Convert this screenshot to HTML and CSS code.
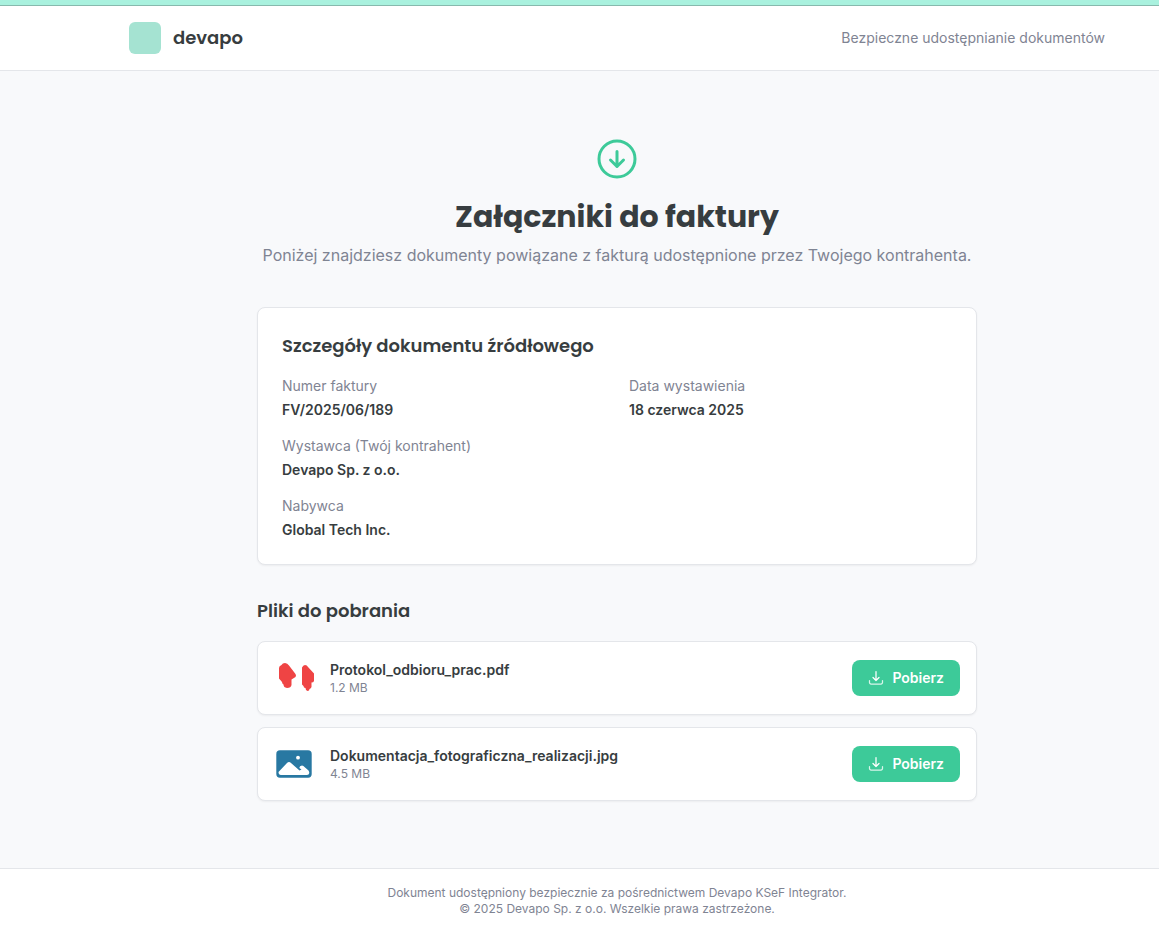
FILE: index.html
```html
<!DOCTYPE html>
<html lang="pl">
<head>
    <meta charset="UTF-8">
    <meta name="viewport" content="width=device-width, initial-scale=1.0">
    <title>Załączniki do faktury</title>
    <link rel="stylesheet" href="styles.css">
</head>
<body>
    <div class="top-strip"></div>

    <header class="header">
        <div class="header-inner">
            <div class="brand">
                <span class="brand-logo"></span>
                <span class="brand-name">devapo</span>
            </div>
            <span class="header-note">Bezpieczne udostępnianie dokumentów</span>
        </div>
    </header>

    <main class="main">
        <div class="intro">
            <svg class="intro-icon" viewBox="0 0 24 24" fill="none" stroke="currentColor" stroke-width="1.5" stroke-linecap="round" stroke-linejoin="round">
                <circle cx="12" cy="12" r="9"/>
                <path d="M12 8.25v7.5M8.75 12.5 12 15.75l3.25-3.25"/>
            </svg>
            <h1>Załączniki do faktury</h1>
            <p>Poniżej znajdziesz dokumenty powiązane z fakturą udostępnione przez Twojego kontrahenta.</p>
        </div>

        <section class="card">
            <h2>Szczegóły dokumentu źródłowego</h2>
            <dl class="details">
                <div>
                    <dt>Numer faktury</dt>
                    <dd>FV/2025/06/189</dd>
                </div>
                <div>
                    <dt>Data wystawienia</dt>
                    <dd>18 czerwca 2025</dd>
                </div>
                <div class="wide">
                    <dt>Wystawca (Twój kontrahent)</dt>
                    <dd>Devapo Sp. z o.o.</dd>
                </div>
                <div class="wide">
                    <dt>Nabywca</dt>
                    <dd>Global Tech Inc.</dd>
                </div>
            </dl>
        </section>

        <section class="files">
            <h2>Pliki do pobrania</h2>
            <ul class="file-list">
                <li class="file">
                    <svg class="file-icon pdf" viewBox="0 0 40 40" fill="currentColor">
                        <path d="M5 10Q5 8 7.5 7 8.5 5 11 5 13.500 5 15 7.500L21.500 16Q22.500 17.500 21.500 19L17.500 21.500 17.500 27Q17 30 13 30 9.500 29.500 9.500 26.500 8 25.500 8 24L5 20.500Z"/>
                        <path d="M28 9.500Q29 7 31 7 33 7 34 9L40 15.500V23Q39.500 24.500 37.500 24.500V29Q37 30.500 35.500 31 35.500 33 33.500 33 31.500 32.500 31.500 30 29.500 30 29.500 28L28 26.500Z"/>
                    </svg>
                    <div class="file-info">
                        <span class="file-name">Protokol_odbioru_prac.pdf</span>
                        <span class="file-size">1.2 MB</span>
                    </div>
                    <button class="download" type="button">
                        <svg viewBox="0 0 16 16" fill="none" stroke="currentColor" stroke-width="1.25" stroke-linecap="round" stroke-linejoin="round">
                            <path d="M1.5 10.500v2a1.500 1.500 0 0 0 1.500 1.500h10a1.500 1.500 0 0 0 1.500-1.500v-2" opacity=".8"/>
                            <path d="M8 1.500v9M5 7.500l3 3 3-3"/>
                        </svg>
                        Pobierz
                    </button>
                </li>
                <li class="file">
                    <svg class="file-icon image" viewBox="0 0 40 40">
                        <rect x="2.3" y="6.3" width="35.400" height="27.400" rx="3.700" fill="currentColor"/>
                        <path d="M4.500 28 13 19Q15 17 17 19L25.500 26.500 27.500 25.500 25.300 24Q25.500 21.500 28 21.500 29.500 21.500 30.500 23L34.500 26.500Q35.300 27.500 35.300 29 35 31 33 31H7Q4.500 31 4.500 28Z" fill="#fff"/>
                        <circle cx="24" cy="13.700" r="1.900" fill="#fff"/>
                    </svg>
                    <div class="file-info">
                        <span class="file-name">Dokumentacja_fotograficzna_realizacji.jpg</span>
                        <span class="file-size">4.5 MB</span>
                    </div>
                    <button class="download" type="button">
                        <svg viewBox="0 0 16 16" fill="none" stroke="currentColor" stroke-width="1.25" stroke-linecap="round" stroke-linejoin="round">
                            <path d="M1.5 10.500v2a1.500 1.500 0 0 0 1.500 1.500h10a1.500 1.500 0 0 0 1.500-1.500v-2" opacity=".8"/>
                            <path d="M8 1.500v9M5 7.500l3 3 3-3"/>
                        </svg>
                        Pobierz
                    </button>
                </li>
            </ul>
        </section>
    </main>

    <footer class="footer">
        <p>Dokument udostępniony bezpiecznie za pośrednictwem Devapo KSeF Integrator.</p>
        <p>© 2025 Devapo Sp. z o.o. Wszelkie prawa zastrzeżone.</p>
    </footer>
</body>
</html>
```
FILE: styles.css
```css
* {
    box-sizing: border-box;
}

body {
    --offset: 75px;
    margin: 0;
    min-height: 100vh;
    display: flex;
    flex-direction: column;
    background: #f8f9fb;
    color: #373d40;
    font-family: Inter, "Liberation Sans", sans-serif;
    font-size: 14px;
    line-height: 20px;
}

h1, h2, p, dl, dd, ul {
    margin: 0;
    padding: 0;
}

h1, h2, .brand-name {
    font-family: Poppins, Inter, sans-serif;
}

h2 {
    font-size: 18px;
    line-height: 28px;
    font-weight: 600;
    margin-bottom: 16px;
}

.top-strip {
    height: 6px;
    background: #a9f1de;
    border-bottom: 1px solid #87b9ad;
}

/* Header */
.header {
    background: #fff;
    border-bottom: 1px solid #e4e6ea;
    padding-left: var(--offset);
}

.header-inner {
    max-width: 1024px;
    margin: 0 auto;
    padding: 16px 24px;
    display: flex;
    align-items: center;
    justify-content: space-between;
}

.brand {
    display: flex;
    align-items: center;
    gap: 12px;
}

.brand-logo {
    width: 32px;
    height: 32px;
    border-radius: 6px;
    background: #a5e3d2;
}

.brand-name {
    font-size: 18px;
    line-height: 28px;
    font-weight: 600;
}

.header-note {
    color: #7f8493;
}

/* Content */
.main {
    flex: 1;
    padding: 64px 24px 64px calc(var(--offset) + 24px);
}

.intro, .card, .files {
    max-width: 720px;
    margin: 0 auto;
}

.intro {
    text-align: center;
    margin-bottom: 40px;
}

.intro-icon {
    display: block;
    width: 48px;
    height: 48px;
    margin: 0 auto 16px;
    color: #3dca99;
}

.intro h1 {
    font-size: 30px;
    line-height: 36px;
    font-weight: 700;
    margin-bottom: 8px;
}

.intro p {
    font-size: 16px;
    line-height: 24px;
    color: #7f8493;
}

.card, .file {
    background: #fff;
    border: 1px solid #e4e6ea;
    border-radius: 8px;
    box-shadow: 0 1px 2px rgba(0, 0, 0, 0.05);
}

.card {
    padding: 24px;
    margin-bottom: 32px;
}

.details {
    display: grid;
    grid-template-columns: 1fr 1fr;
    gap: 16px 24px;
}

.details .wide {
    grid-column: span 2;
}

.details dt {
    color: #7f8493;
    margin-bottom: 4px;
}

.details dd {
    font-weight: 600;
}

/* Files */
.file-list {
    list-style: none;
    display: flex;
    flex-direction: column;
    gap: 12px;
}

.file {
    display: flex;
    align-items: center;
    gap: 16px;
    padding: 16px;
}

.file-icon {
    width: 40px;
    height: 40px;
    flex-shrink: 0;
}

.file-icon.pdf {
    color: #ef4444;
}

.file-icon.image {
    color: #2878a2;
}

.file-info {
    flex: 1;
    display: flex;
    flex-direction: column;
}

.file-name {
    font-weight: 600;
}

.file-size {
    font-size: 12px;
    line-height: 16px;
    color: #7f8493;
}

.download {
    display: flex;
    align-items: center;
    gap: 8px;
    padding: 8px 16px;
    border: none;
    border-radius: 8px;
    background: #3dca99;
    color: #fff;
    font: inherit;
    font-weight: 600;
    cursor: pointer;
}

.download svg {
    width: 16px;
    height: 16px;
}

/* Footer */
.footer {
    background: #fff;
    border-top: 1px solid #e4e6ea;
    padding: 16px 24px 8px calc(var(--offset) + 24px);
    text-align: center;
    font-size: 12px;
    line-height: 16px;
    color: #7f8493;
}
```
